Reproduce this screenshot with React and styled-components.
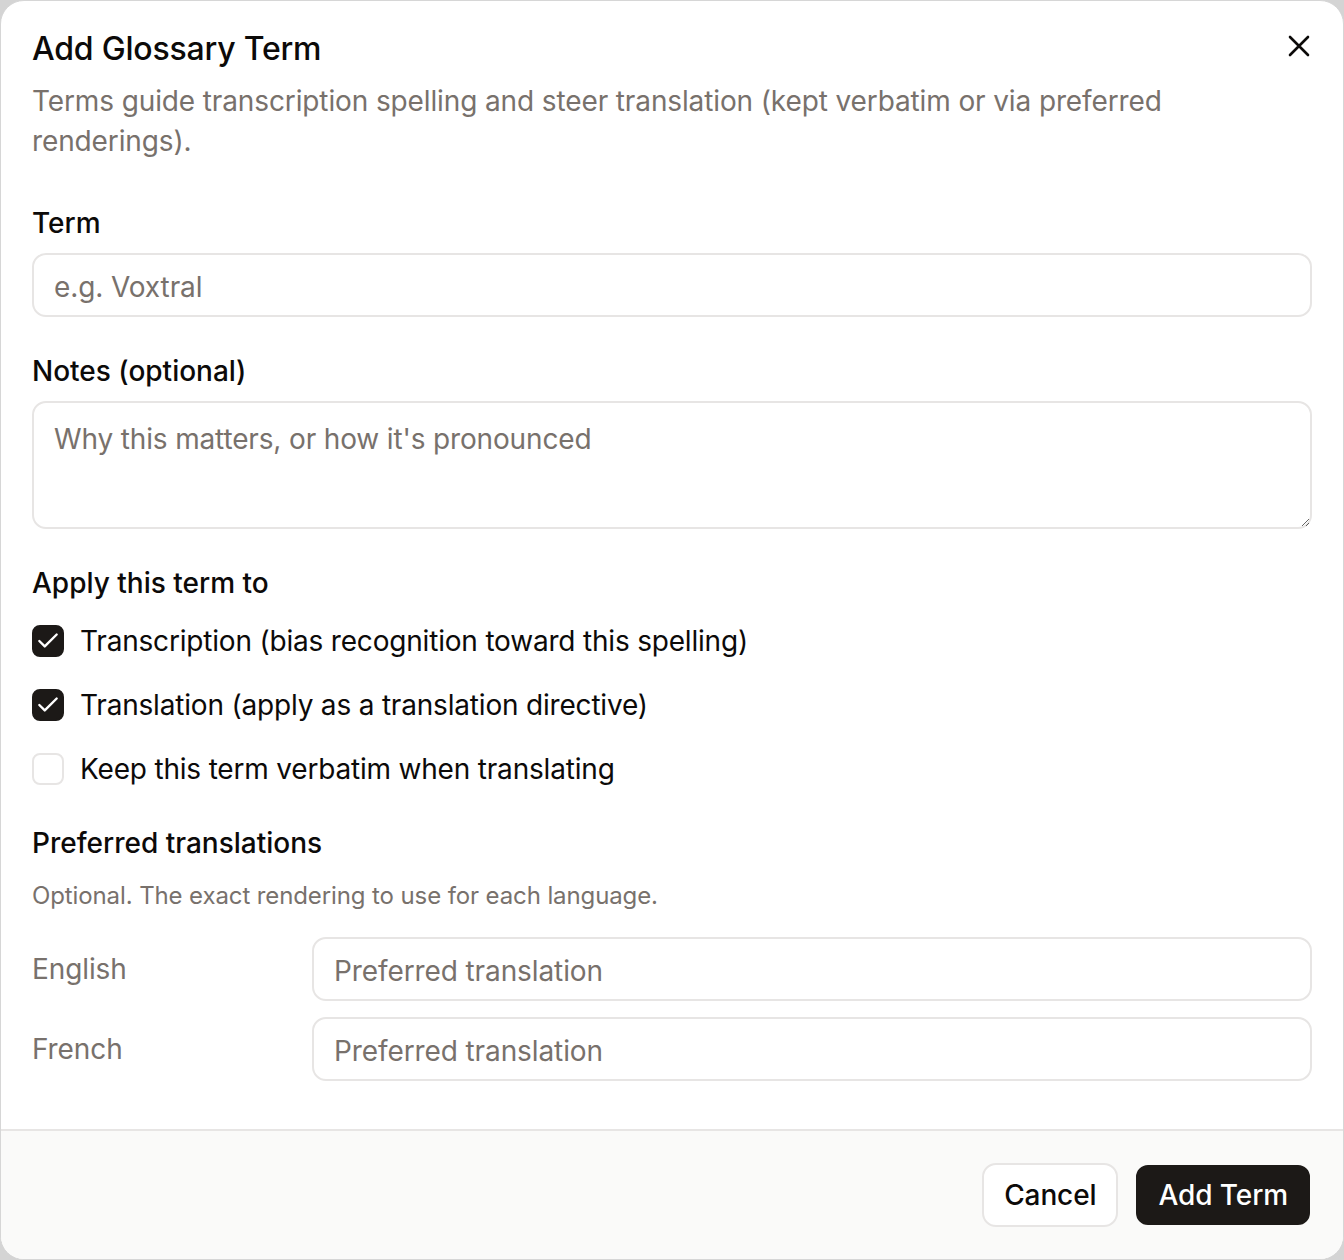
import React from "react";
import styled, { createGlobalStyle } from "styled-components";

const Global = createGlobalStyle`
  * { box-sizing: border-box; }
  html, body { margin: 0; padding: 0; background: #d4d4d4; }
  body { font-family: Inter, "Noto Sans", "Liberation Sans", sans-serif; color: #0c0a09; }
`;

const Dialog = styled.div`
  position: relative;
  width: 100%;
  height: 100vh;
  background: #ffffff;
  border: 1px solid #d6d6d6;
  border-radius: 24px;
  overflow: hidden;
  display: flex;
  flex-direction: column;
`;

const Body = styled.div`
  flex: 1;
  padding: 32px 31px 48px;
  display: flex;
  flex-direction: column;
`;

const Title = styled.h2`
  margin: 0;
  font-size: 32px;
  line-height: 32px;
  font-weight: 500;
  letter-spacing: -0.2px;
  color: #0c0a09;
`;

const Description = styled.p`
  margin: 16px 0 0;
  font-size: 28px;
  line-height: 40px;
  letter-spacing: -0.12px;
  color: #78716c;
  max-width: 1180px;
`;

const CloseButton = styled.button`
  position: absolute;
  top: 34px;
  right: 33px;
  width: 22px;
  height: 22px;
  padding: 0;
  border: none;
  background: transparent;
  display: flex;
  align-items: center;
  justify-content: center;
  cursor: pointer;
`;

const Field = styled.div`
  display: flex;
  flex-direction: column;
  gap: ${(p) => p.$gap ?? 16}px;
  margin-top: ${(p) => p.$top}px;
`;

const Label = styled.label`
  font-size: 28px;
  line-height: 28px;
  font-weight: 500;
  color: #0c0a09;
`;

const Input = styled.input`
  width: 100%;
  height: 64px;
  border: 2px solid #e7e5e4;
  border-radius: 14px;
  padding: 3px 20px 0;
  font-family: inherit;
  font-size: 28px;
  letter-spacing: -0.1px;
  color: #0c0a09;
  background: #fff;
  outline: none;
  &::placeholder { color: #78716c; }
`;

const TextArea = styled.textarea`
  width: 100%;
  height: 128px;
  border: 2px solid #e7e5e4;
  border-radius: 14px;
  padding: 16px 20px;
  font-family: inherit;
  font-size: 28px;
  line-height: 40px;
  letter-spacing: -0.15px;
  color: #0c0a09;
  background: #fff;
  outline: none;
  display: block;
  &::placeholder { color: #78716c; }
`;

const CheckList = styled.div`
  display: flex;
  flex-direction: column;
  gap: 24px;
  margin-top: 24px;
`;

const CheckRow = styled.label`
  display: flex;
  align-items: center;
  gap: 16px;
  font-size: 28px;
  line-height: 40px;
  letter-spacing: -0.19px;
  color: #0c0a09;
`;

const Box = styled.span`
  width: 32px;
  height: 32px;
  border-radius: 8px;
  flex-shrink: 0;
  display: flex;
  align-items: center;
  justify-content: center;
  background: ${(p) => (p.$checked ? "#1c1917" : "#ffffff")};
  border: 2px solid ${(p) => (p.$checked ? "#1c1917" : "#e7e5e4")};
`;

const Hint = styled.p`
  margin: 23px 0 0;
  font-size: 24px;
  line-height: 32px;
  letter-spacing: -0.11px;
  color: #78716c;
`;

const LangGrid = styled.div`
  display: grid;
  grid-template-columns: 248px 1fr;
  column-gap: 32px;
  row-gap: 16px;
  align-items: center;
  margin-top: 25px;
`;

const LangName = styled.span`
  font-size: 28px;
  line-height: 40px;
  letter-spacing: -0.1px;
  color: #78716c;
`;

const Footer = styled.div`
  display: flex;
  justify-content: flex-end;
  gap: 16px;
  padding: 32px 31px 32px 32px;
  background: #fafaf9;
  border-top: 2px solid #e7e5e4;
`;

const Button = styled.button`
  height: 64px;
  padding: 0 ${(p) => (p.$primary ? 22 : 20)}px;
  border-radius: 14px;
  font-family: inherit;
  font-size: 28px;
  font-weight: 500;
  letter-spacing: -0.1px;
  cursor: pointer;
  border: 2px solid ${(p) => (p.$primary ? "#fafaf9" : "#e7e5e4")};
  background: ${(p) => (p.$primary ? "#1c1917" : "#ffffff")};
  color: ${(p) => (p.$primary ? "#ffffff" : "#0c0a09")};
`;

function Check({ checked }) {
  return (
    <Box $checked={checked}>
      {checked && (
        <svg width="26" height="26" viewBox="0 0 24 24" fill="none" stroke="#fff" strokeWidth="2.2" strokeLinecap="round" strokeLinejoin="round">
          <path d="M20 6 9 17l-5-5" />
        </svg>
      )}
    </Box>
  );
}

export default function App() {
  const options = [
    { label: "Transcription (bias recognition toward this spelling)", checked: true },
    { label: "Translation (apply as a translation directive)", checked: true },
    { label: "Keep this term verbatim when translating", checked: false },
  ];
  return (
    <>
      <Global />
      <Dialog>
        <CloseButton aria-label="Close">
          <svg width="22" height="22" viewBox="0 0 22 22" fill="none" stroke="#0c0a09" strokeWidth="2.6" strokeLinecap="round">
            <path d="M2 2 20 20M20 2 2 20" />
          </svg>
        </CloseButton>
        <Body>
          <Title>Add Glossary Term</Title>
          <Description>
            Terms guide transcription spelling and steer translation (kept verbatim or via preferred renderings).
          </Description>

          <Field $top={48}>
            <Label>Term</Label>
            <Input placeholder="e.g. Voxtral" />
          </Field>

          <Field $top={40}>
            <Label>Notes (optional)</Label>
            <TextArea placeholder="Why this matters, or how it's pronounced" />
          </Field>

          <Field $top={40} $gap={0}>
            <Label>Apply this term to</Label>
            <CheckList>
              {options.map((o) => (
                <CheckRow key={o.label}>
                  <Check checked={o.checked} />
                  {o.label}
                </CheckRow>
              ))}
            </CheckList>
          </Field>

          <Field $top={40} $gap={0}>
            <Label>Preferred translations</Label>
            <Hint>Optional. The exact rendering to use for each language.</Hint>
            <LangGrid>
              <LangName>English</LangName>
              <Input placeholder="Preferred translation" />
              <LangName>French</LangName>
              <Input placeholder="Preferred translation" />
            </LangGrid>
          </Field>
        </Body>
        <Footer>
          <Button>Cancel</Button>
          <Button $primary>Add Term</Button>
        </Footer>
      </Dialog>
    </>
  );
}
